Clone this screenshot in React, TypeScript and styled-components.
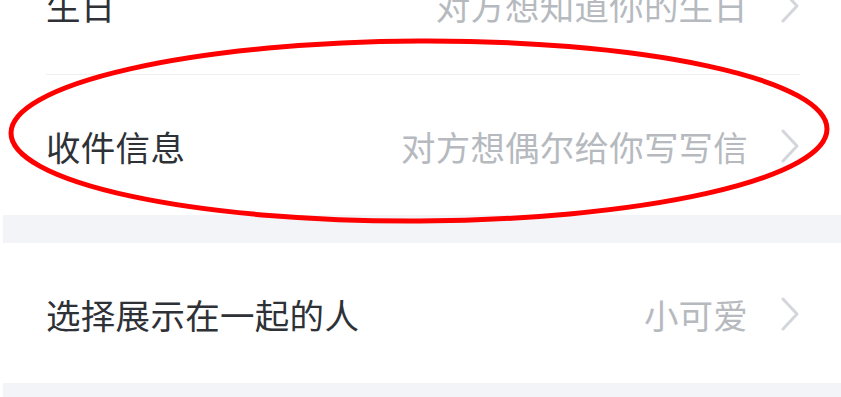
import styled, { createGlobalStyle } from 'styled-components';

const GlobalStyle = createGlobalStyle`
  html, body {
    margin: 0;
    padding: 0;
    background: #ffffff;
  }
  body {
    font-family: "Noto Sans CJK SC", "Noto Sans", sans-serif;
    overflow: hidden;
  }
`;

const Page = styled.div`
  position: relative;
  width: 841px;
  height: 397px;
  overflow: hidden;
  background: #ffffff;
`;

const Group = styled.div<{ $offset?: number }>`
  display: flex;
  flex-direction: column;
  margin-top: ${(p) => p.$offset || 0}px;
  background: #ffffff;
`;

const Row = styled.div<{ $divider?: boolean }>`
  display: flex;
  align-items: center;
  height: 140px;
  padding-top: 2px;
  margin: 0 41px 0 46px;
  box-sizing: border-box;
  border-bottom: ${(p) => (p.$divider ? '1px solid #eeeff1' : 'none')};
`;

const Label = styled.span`
  flex: 1;
  font-size: 34.5px;
  line-height: 1;
  color: #2e3136;
  letter-spacing: 0.3px;
`;

const Value = styled.span`
  font-size: 34.5px;
  line-height: 1;
  color: #b6babf;
  margin-right: 32px;
  letter-spacing: 0.2px;
`;

const Gap = styled.div<{ $height: number }>`
  height: ${(p) => p.$height}px;
  margin-left: 3px;
  background: #f2f4f7;
`;

const Mark = styled.svg`
  position: absolute;
  left: 0;
  top: 0;
  pointer-events: none;
`;

function Chevron() {
  return (
    <svg width="20" height="34" viewBox="0 0 20 34">
      <polyline
        points="3,2 17,17 3,32"
        fill="none"
        stroke="#d3d6da"
        strokeWidth="3"
        strokeLinecap="round"
        strokeLinejoin="round"
      />
    </svg>
  );
}

type Item = { label: string; value: string };

const profile: Item[] = [
  { label: '生日', value: '对方想知道你的生日' },
  { label: '收件信息', value: '对方想偶尔给你写写信' },
];

const partner: Item[] = [{ label: '选择展示在一起的人', value: '小可爱' }];

export default function App() {
  return (
    <Page>
      <GlobalStyle />
      <Group $offset={-65}>
        {profile.map((item, i) => (
          <Row key={item.label} $divider={i < profile.length - 1}>
            <Label>{item.label}</Label>
            <Value>{item.value}</Value>
            <Chevron />
          </Row>
        ))}
      </Group>
      <Gap $height={28} />
      <Group>
        {partner.map((item) => (
          <Row key={item.label}>
            <Label>{item.label}</Label>
            <Value>{item.value}</Value>
            <Chevron />
          </Row>
        ))}
      </Group>
      <Gap $height={20} />
      <Mark width="841" height="397" viewBox="0 0 841 397">
        <ellipse
          cx="419"
          cy="131"
          rx="408"
          ry="90"
          fill="none"
          stroke="#ff0000"
          strokeWidth="5"
          transform="rotate(-0.3 419 131)"
        />
      </Mark>
    </Page>
  );
}
